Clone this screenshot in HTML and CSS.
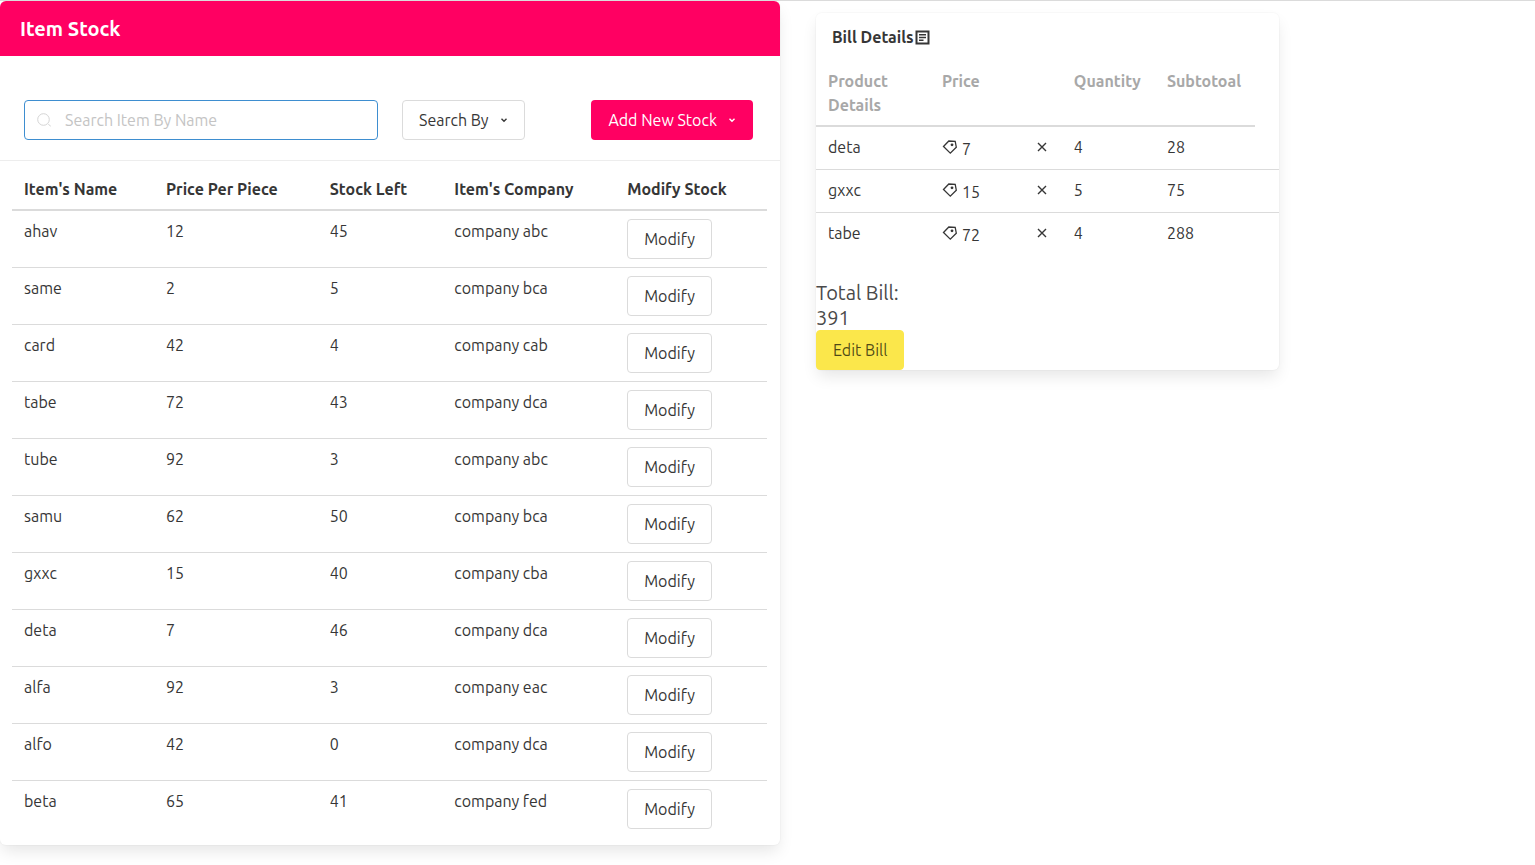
FILE: index.html
```html
<!DOCTYPE html>
<html lang="en">
<head>
<meta charset="utf-8">
<title>Item Stock</title>
<link rel="stylesheet" href="styles.css">
</head>
<body>
<svg class="symbols" aria-hidden="true">
  <symbol id="tag" viewBox="0 0 16 16"><path d="M1.5 7.5 6.8 2 13.2 2.4 14.3 8.2 8.3 14.2Z"/><circle class="dot" cx="10" cy="5.8" r="1.4"/></symbol>
  <symbol id="chevron" viewBox="0 0 8 8"><path d="M1.5 2.7 4 5.2 6.5 2.7"/></symbol>
  <symbol id="cross" viewBox="0 0 10 10"><path d="M1 1 9 9M9 1 1 9"/></symbol>
</svg>
<main class="layout">
  <section class="card stock">
    <header class="stock-header"><h1 class="stock-title">Item Stock</h1></header>
    <div class="toolbar">
      <label class="search">
        <svg class="search-icon" viewBox="0 0 16 16" aria-hidden="true"><circle cx="7.5" cy="7.5" r="5.8"/><path d="M12.3 12.3 14.8 14.2"/></svg>
        <input class="search-input" type="text" placeholder="Search Item By Name" aria-label="Search Item By Name">
      </label>
      <button class="button" type="button">Search By <svg class="chevron" aria-hidden="true"><use href="#chevron"/></svg></button>
      <button class="button button-primary" type="button">Add New Stock <svg class="chevron" aria-hidden="true"><use href="#chevron"/></svg></button>
    </div>
    <div class="stock-content">
      <table class="table stock-table">
        <colgroup><col class="col-name"><col class="col-price"><col class="col-left"><col class="col-company"><col></colgroup>
        <thead><tr><th>Item's Name</th><th>Price Per Piece</th><th>Stock Left</th><th>Item's Company</th><th>Modify Stock</th></tr></thead>
        <tbody>
          <tr><td>ahav</td><td>12</td><td>45</td><td>company abc</td><td><button class="button" type="button">Modify</button></td></tr>
          <tr><td>same</td><td>2</td><td>5</td><td>company bca</td><td><button class="button" type="button">Modify</button></td></tr>
          <tr><td>card</td><td>42</td><td>4</td><td>company cab</td><td><button class="button" type="button">Modify</button></td></tr>
          <tr><td>tabe</td><td>72</td><td>43</td><td>company dca</td><td><button class="button" type="button">Modify</button></td></tr>
          <tr><td>tube</td><td>92</td><td>3</td><td>company abc</td><td><button class="button" type="button">Modify</button></td></tr>
          <tr><td>samu</td><td>62</td><td>50</td><td>company bca</td><td><button class="button" type="button">Modify</button></td></tr>
          <tr><td>gxxc</td><td>15</td><td>40</td><td>company cba</td><td><button class="button" type="button">Modify</button></td></tr>
          <tr><td>deta</td><td>7</td><td>46</td><td>company dca</td><td><button class="button" type="button">Modify</button></td></tr>
          <tr><td>alfa</td><td>92</td><td>3</td><td>company eac</td><td><button class="button" type="button">Modify</button></td></tr>
          <tr><td>alfo</td><td>42</td><td>0</td><td>company dca</td><td><button class="button" type="button">Modify</button></td></tr>
          <tr><td>beta</td><td>65</td><td>41</td><td>company fed</td><td><button class="button" type="button">Modify</button></td></tr>
        </tbody>
      </table>
    </div>
  </section>
  <section class="card bill">
    <h2 class="bill-title">Bill Details<svg class="bill-icon" viewBox="0 0 16 16" aria-hidden="true"><path d="M2.5 2.5H14.5V14.5H2.5Z"/><path class="thin" d="M5 5.8H12M5 8.5H12M5 11.2H9.5"/></svg></h2>
    <table class="table bill-table">
      <colgroup><col class="bill-product"><col class="bill-price"><col class="bill-times"><col class="bill-quantity"><col class="bill-subtotal"><col></colgroup>
      <thead><tr><th>Product Details</th><th>Price</th><th></th><th>Quantity</th><th>Subtotoal</th></tr></thead>
      <tbody>
        <tr><td>deta</td><td><span class="price"><svg class="tag" aria-hidden="true"><use href="#tag"/></svg>7</span></td><td><svg class="cross" role="img" aria-label="times"><use href="#cross"/></svg></td><td>4</td><td>28</td><td></td></tr>
        <tr><td>gxxc</td><td><span class="price"><svg class="tag" aria-hidden="true"><use href="#tag"/></svg>15</span></td><td><svg class="cross" role="img" aria-label="times"><use href="#cross"/></svg></td><td>5</td><td>75</td><td></td></tr>
        <tr><td>tabe</td><td><span class="price"><svg class="tag" aria-hidden="true"><use href="#tag"/></svg>72</span></td><td><svg class="cross" role="img" aria-label="times"><use href="#cross"/></svg></td><td>4</td><td>288</td><td></td></tr>
      </tbody>
    </table>
    <p class="total">Total Bill:<br>391</p>
    <button class="button button-warning" type="button">Edit Bill</button>
  </section>
</main>
</body>
</html>
```
FILE: styles.css
```css
* { box-sizing: border-box; }
body {
  margin: 0;
  min-height: 100vh;
  border-top: 1px solid #dbdbdb;
  background: #fff;
  color: #363636;
  font: 16px/24px "Ubuntu", "Noto Sans", sans-serif;
}
.symbols { display: none; }
.layout {
  display: grid;
  grid-template-columns: minmax(0, 780fr) minmax(0, 463fr) minmax(0, 220fr);
  column-gap: 36px;
  align-items: start;
}
.card {
  border-radius: 6px;
  background: #fff;
  box-shadow: 0 8px 16px -2px rgba(10, 10, 10, .1), 0 0 0 1px rgba(10, 10, 10, .02);
}
.stock { padding-bottom: 8px; }
.stock-header {
  padding: 14px 20px;
  border-radius: 6px 6px 0 0;
  background: #ff0062;
  color: #fff;
}
.stock-title { margin: 0; font-size: 20px; line-height: 27px; font-weight: 700; }
.toolbar {
  display: flex;
  gap: 24px;
  padding: 44px 27px 20px 24px;
  border-bottom: 1px solid #ededed;
}
.search { position: relative; flex: 0 1 354px; }
.search-icon {
  position: absolute;
  left: 12px;
  top: 12px;
  width: 16px;
  height: 16px;
  fill: none;
  stroke: #d5d5d5;
}
.search-input {
  display: block;
  width: 100%;
  height: 40px;
  padding: 0 12px 0 40px;
  border: 1px solid #3e8ed0;
  border-radius: 4px;
  outline: 0;
  background: #fff;
  color: #363636;
  font: inherit;
}
.search-input::placeholder { color: #c4c4c4; opacity: 1; }
.button {
  display: inline-flex;
  align-items: center;
  justify-content: center;
  gap: 11px;
  height: 40px;
  padding: 0 16px;
  border: 1px solid #dbdbdb;
  border-radius: 4px;
  background: #fff;
  color: #363636;
  font: inherit;
  white-space: nowrap;
  cursor: pointer;
}
.button-primary {
  margin-left: auto;
  border-color: transparent;
  background: #ff0062 border-box;
  color: #fff;
}
.button-warning { border-color: #fbe74b; background: #fbe74b; color: rgba(0, 0, 0, .7); }
.chevron { width: 8px; height: 8px; fill: none; stroke: currentColor; stroke-width: 1.4; }
.stock-content { padding: 8px 13px 0 12px; }
.table { width: 100%; table-layout: fixed; border-collapse: separate; border-spacing: 0; }
.table th, .table td {
  padding: 8px 0 8px 12px;
  border-bottom: 1px solid #dbdbdb;
  text-align: left;
  vertical-align: top;
}
.table th { border-bottom-width: 2px; font-weight: 700; white-space: nowrap; }
.table tbody tr:last-child td { border-bottom: 0; }
.table .button { display: flex; }
.col-name { width: 18.8%; }
.col-price { width: 21.7%; }
.col-left { width: 16.5%; }
.col-company { width: 22.9%; }
.bill { margin-top: 12px; }
.bill-title {
  display: flex;
  align-items: center;
  margin: 0;
  padding: 12px 16px;
  font-size: 16px;
  line-height: 24px;
  font-weight: 700;
}
.bill-icon { width: 16px; height: 16px; fill: none; stroke: currentColor; stroke-width: 2; }
.bill-icon .thin { stroke-width: 1.4; }
.bill-table { margin-bottom: 25px; }
.bill-table th { color: #a8a8a8; }
.bill-table th:first-child { white-space: normal; }
.bill-table td { height: 43px; padding-bottom: 0; }
.bill-table tbody tr:last-child td { height: 42px; }
.bill-product { width: 24.6%; }
.bill-price { width: 20.5%; }
.bill-times { width: 8%; }
.bill-quantity { width: 20.1%; }
.bill-subtotal { width: 21.6%; }
.price { display: flex; gap: 4px; line-height: 28px; }
.tag { width: 16px; height: 16px; margin-top: 4px; fill: none; stroke: currentColor; stroke-width: 1.3; }
.dot { fill: currentColor; stroke: none; }
.cross { display: block; width: 10px; height: 10px; margin-top: 7px; fill: none; stroke: currentColor; stroke-width: 1.4; }
.total { margin: 0; color: #4a4a4a; font-size: 20px; line-height: 25px; }
```
